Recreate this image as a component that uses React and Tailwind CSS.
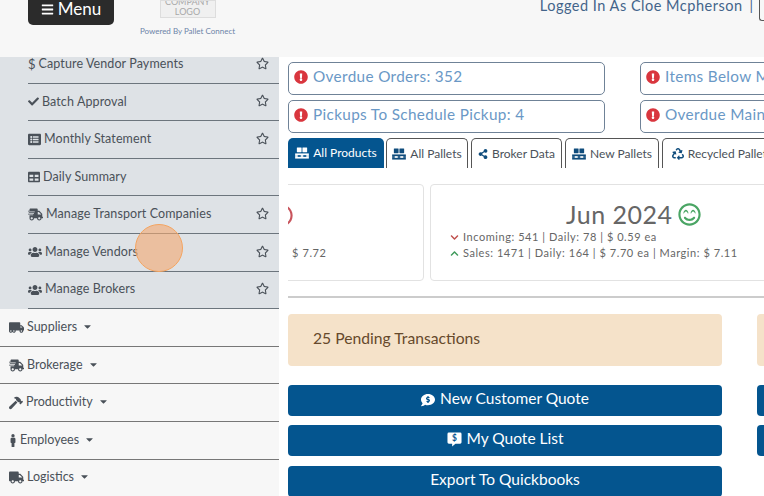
import React from 'react';
import {
  FaBars, FaCheck, FaListAlt, FaTable, FaShippingFast, FaUsers, FaTruckMoving, FaHammer, FaMale, FaTruck,
  FaExclamationCircle, FaShareAlt, FaRecycle, FaRegStar, FaChevronDown, FaChevronUp, FaRegSmileBeam, FaRegFrown,
  FaCommentDollar, FaCaretDown,
} from 'react-icons/fa';

const font = { fontFamily: '"Lato", "Open Sans", sans-serif' };

// two boxes sitting on a pallet
const PalletIcon = ({ className }) => (
  <svg viewBox="0 0 16 14" className={className} fill="currentColor">
    <rect x="2" y="0.5" width="5.5" height="5.5" rx="0.5" />
    <rect x="8.5" y="0.5" width="5.5" height="5.5" rx="0.5" />
    <rect x="0" y="7.5" width="16" height="2" />
    <rect x="0" y="9.5" width="3" height="2" />
    <rect x="6.5" y="9.5" width="3" height="2" />
    <rect x="13" y="9.5" width="3" height="2" />
    <rect x="0" y="11.5" width="16" height="2" />
  </svg>
);

// square speech bubble with a dollar sign
const QuoteIcon = ({ className }) => (
  <svg viewBox="0 0 16 16" className={className}>
    <path fill="currentColor" d="M2 0.5h12a1.5 1.5 0 0 1 1.5 1.5v9a1.5 1.5 0 0 1-1.5 1.5h-5l-3.5 3v-3H2A1.5 1.5 0 0 1 0.5 11V2A1.5 1.5 0 0 1 2 0.5z" />
    <text x="8" y="10" textAnchor="middle" fontSize="9" fontWeight="700" fill="#04558f">$</text>
  </svg>
);

const subItems = [
  { label: 'Capture Vendor Payments', icon: <span className="text-[13px]">$</span>, star: true },
  { label: 'Batch Approval', icon: <FaCheck className="w-[11px] h-[11px]" />, star: true },
  { label: 'Monthly Statement', icon: <FaListAlt className="w-[13px] h-[13px]" />, star: true },
  { label: 'Daily Summary', icon: <FaTable className="w-[12px] h-[12px]" />, star: false },
  { label: 'Manage Transport Companies', icon: <FaShippingFast className="w-[15px] h-[15px]" />, star: true },
  { label: 'Manage Vendors', icon: <FaUsers className="w-[14px] h-[14px]" />, star: true },
  { label: 'Manage Brokers', icon: <FaUsers className="w-[14px] h-[14px]" />, star: true },
];

const menuItems = [
  { label: 'Suppliers', icon: <FaTruckMoving className="w-[15px] h-[15px]" /> },
  { label: 'Brokerage', icon: <FaShippingFast className="w-[15px] h-[15px]" /> },
  { label: 'Productivity', icon: <FaHammer className="w-[14px] h-[14px]" /> },
  { label: 'Employees', icon: <FaMale className="w-[8px] h-[13px]" /> },
  { label: 'Logistics', icon: <FaTruck className="w-[15px] h-[15px]" /> },
];

const tabs = [
  { label: 'All Pallets', icon: <PalletIcon className="w-[14px] h-[12px]" />, width: 'w-[82px]' },
  { label: 'Broker Data', icon: <FaShareAlt className="w-[10px] h-[10px]" />, width: 'w-[91px]' },
  { label: 'New Pallets', icon: <PalletIcon className="w-[14px] h-[12px]" />, width: 'w-[94px]' },
  { label: 'Recycled Pallets', icon: <FaRecycle className="w-[12px] h-[12px]" />, width: 'w-[120px]' },
];

const Alert = ({ text }) => (
  <div className="w-[317px] h-[33px] shrink-0 flex items-center gap-[5px] pl-[5px] border border-[#6f8297] rounded-[5px] whitespace-nowrap">
    <FaExclamationCircle className="mb-[3px] w-[14px] h-[14px] text-[#d9363e] shrink-0" />
    <span className="pb-[4px] text-[15.3px] tracking-[0.35px] text-[#6a98c6]">{text}</span>
  </div>
);

const BlueButton = ({ children, className = '' }) => (
  <div className={`flex items-center justify-center gap-[5px] bg-[#04558f] text-white text-[15.5px] rounded-[4px] whitespace-nowrap ${className}`}>
    {children}
  </div>
);

export default function App() {
  return (
    <div className="relative w-[764px] h-[496px] overflow-hidden bg-white" style={font}>
      <header className="h-[57px] bg-[#f7f7f7] flex items-start overflow-hidden">
        <div className="ml-[28px] -mt-[15px] w-[86px] h-[40px] bg-[#2b2b2b] rounded-[5px] flex items-center justify-center gap-[4px] pt-[8px] text-white text-[17px] shrink-0">
          <FaBars className="w-[13px] h-[13px]" />
          Menu
        </div>
        <div className="ml-[27px] w-[93px] shrink-0 flex flex-col items-center">
          <div className="w-[56px] h-[18px] flex flex-col items-center justify-end bg-[#f0f0f0] border border-[#dddddd] text-[9px] leading-[10px] text-[#a8a8a8] overflow-hidden">
            <span>COMPANY</span>
            <span>LOGO</span>
          </div>
          <span className="mt-[8px] text-[8px] leading-[11px] text-[#6d84a8] whitespace-nowrap">Powered By Pallet Connect</span>
        </div>
        <div className="ml-auto -mt-[3px] flex items-start whitespace-nowrap">
          <span className="text-[14.5px] leading-[18px] text-[#43648a] tracking-[0.5px]">Logged In As Cloe Mcpherson</span>
          <span className="ml-[7px] text-[14px] leading-[18px] text-[#43648a]">|</span>
          <div className="ml-[6px] w-[5px] h-[24px] border-l border-b border-[#555555] rounded-bl-[3px]" />
        </div>
      </header>

      <div className="flex h-[439px]">
        <aside className="w-[279px] shrink-0 overflow-hidden text-[12.5px] text-[#4a5159]">
          <div className="-mt-[11px] bg-[#dee2e6] pl-[28px]">
            {subItems.map((item) => (
              <div key={item.label} className="h-[37.6px] flex items-center gap-[3px] border-b border-[#6c757d] whitespace-nowrap">
                <span className="flex items-center">{item.icon}</span>
                <span className="tracking-[0.1px]">{item.label}</span>
                {item.star && <FaRegStar className="ml-auto mr-[10px] mb-[2px] w-[13px] h-[13px]" />}
              </div>
            ))}
          </div>
          {menuItems.map((item) => (
            <div key={item.label} className="h-[37.6px] pl-[9px] flex items-center gap-[3px] bg-[#f7f7f7] border-b border-[#777777] whitespace-nowrap">
              <span className="flex items-center">{item.icon}</span>
              <span>{item.label}</span>
              <FaCaretDown className="ml-[2px] w-[11px] h-[11px] mb-[2px]" />
            </div>
          ))}
        </aside>

        <main className="ml-[9px] flex-1 overflow-hidden">
          <div className="mt-[5px] flex gap-[35px]">
            <Alert text="Overdue Orders: 352" />
            <Alert text="Items Below Minimum: 12" />
          </div>
          <div className="mt-[5px] flex gap-[35px]">
            <Alert text="Pickups To Schedule Pickup: 4" />
            <Alert text="Overdue Maintenance: 3" />
          </div>

          <div className="mt-[5px] h-[30px] flex gap-[2px] text-[12px] whitespace-nowrap">
            <div className="w-[96px] shrink-0 flex items-center justify-center gap-[4px] bg-[#04558f] text-white rounded-t-[5px]">
              <PalletIcon className="w-[14px] h-[12px]" />
              All Products
            </div>
            {tabs.map((tab) => (
              <div key={tab.label} className={`${tab.width} shrink-0 flex items-center justify-center gap-[4px] border-x border-t border-[#555555] rounded-t-[5px] text-[#4a5159] ${tab.label === 'Recycled Pallets' ? '' : 'mr-[1px]'}`}>
                <span className="text-[#0f4c7c]">{tab.icon}</span>
                {tab.label}
              </div>
            ))}
          </div>

          <div className="mt-[16px] h-[97px] flex gap-[6px]">
            <div className="-ml-[200px] w-[336px] shrink-0 border border-[#e2e2e2] rounded-[4px] pl-[181px] pt-[19px]">
              <FaRegFrown className="w-[23px] h-[23px] text-[#c8545c]" />
              <div className="mt-[18px] pl-[22px] text-[11px] tracking-[0.6px] text-[#666666]">$ 7.72</div>
            </div>
            <div className="w-[420px] shrink-0 border border-[#e2e2e2] rounded-[4px] pl-[19px]">
              <div className="mt-[14px] ml-[116px] flex items-center gap-[5px]">
                <span className="text-[25px] leading-[30px] tracking-[0.5px] text-[#666666] whitespace-nowrap">Jun 2024</span>
                <FaRegSmileBeam className="w-[23px] h-[23px] text-[#4aa564]" />
              </div>
              <div className="flex items-center gap-[4px] text-[11px] leading-[16px] tracking-[0.55px] text-[#666666] whitespace-nowrap">
                <FaChevronDown className="w-[9px] h-[9px] text-[#c0504d]" />
                Incoming: 541 | Daily: 78 | $ 0.59 ea
              </div>
              <div className="flex items-center gap-[4px] text-[11px] leading-[16px] tracking-[0.55px] text-[#666666] whitespace-nowrap">
                <FaChevronUp className="w-[9px] h-[9px] text-[#3f9a5b]" />
                Sales: 1471 | Daily: 164 | $ 7.70 ea | Margin: $ 7.11
              </div>
            </div>
          </div>

          <div className="mt-[15px] h-[2px] bg-[#cccccc]" />

          <div className="mt-[16px] flex gap-[35px]">
            <div className="w-[434px] shrink-0 flex flex-col">
              <div className="h-[52px] flex items-center pl-[25px] pb-[3px] bg-[#f5e2c9] rounded-[4px] text-[15.7px] text-[#66492c]">
                25 Pending Transactions
              </div>
              <BlueButton className="mt-[19px] h-[31px] pb-[4px]">
                <FaCommentDollar className="mt-[2px] w-[14px] h-[14px]" />
                New Customer Quote
              </BlueButton>
              <BlueButton className="mt-[9px] h-[31px] pb-[4px]">
                <QuoteIcon className="mt-[2px] w-[15px] h-[15px]" />
                My Quote List
              </BlueButton>
              <BlueButton className="mt-[10px] h-[31px] pb-[4px]">Export To Quickbooks</BlueButton>
            </div>
            <div className="w-[300px] shrink-0 flex flex-col">
              <div className="h-[52px] bg-[#f5e2c9] rounded-[4px]" />
              <div className="mt-[19px] h-[31px] bg-[#04558f] rounded-[4px]" />
              <div className="mt-[9px] h-[31px] bg-[#04558f] rounded-[4px]" />
            </div>
          </div>
        </main>
      </div>

      {/* click marker over the sidebar */}
      <div className="absolute left-[135px] top-[224px] w-[48px] h-[48px] rounded-full bg-[#f4a970]/60 border border-[#f4a460]" />
    </div>
  );
}
